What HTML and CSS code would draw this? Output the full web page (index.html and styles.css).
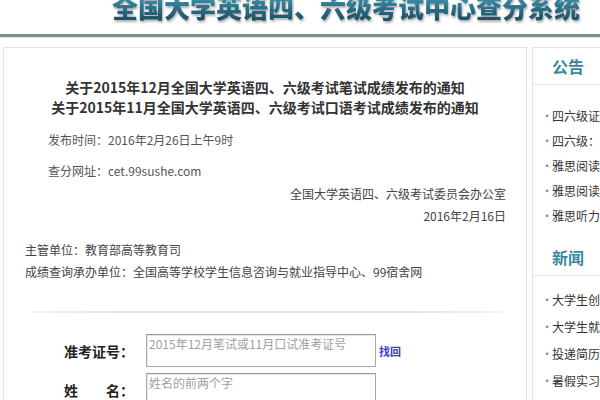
FILE: index.html
```html
<!DOCTYPE html>
<html lang="zh-CN">
  <head>
    <meta charset="utf-8">
    <meta name="viewport" content="width=device-width">
    <title>全国大学英语四、六级考试中心查分系统</title>
    <link rel="stylesheet" href="styles.css">
  </head>

  <body>
    <header class="top">
      <h1 class="site-title">全国大学英语四、六级考试中心查分系统</h1>
    </header>

    <div class="wrap">
      <main class="notice">
        <div class="notice-title">
          <p>关于2015年12月全国大学英语四、六级考试笔试成绩发布的通知</p>
          <p>关于2015年11月全国大学英语四、六级考试口语考试成绩发布的通知</p>
        </div>

        <div class="meta">
          <p>发布时间：2016年2月26日上午9时</p>
          <p>查分网址：cet.99sushe.com</p>
        </div>

        <div class="sign">
          <p>全国大学英语四、六级考试委员会办公室</p>
          <p>2016年2月16日</p>
        </div>

        <div class="org">
          <p>主管单位：教育部高等教育司</p>
          <p>成绩查询承办单位：全国高等学校学生信息咨询与就业指导中心、99宿舍网</p>
        </div>

        <hr class="split">

        <form class="query">
          <div class="row">
            <label for="zkzh">准考证号：</label>
            <textarea id="zkzh" class="field" placeholder="2015年12月笔试或11月口试准考证号"></textarea>
            <a href="#" class="find">找回</a>
          </div>
          <div class="row">
            <label for="xm">姓&#12288;&#12288;名：</label>
            <textarea id="xm" class="field" placeholder="姓名的前两个字"></textarea>
          </div>
        </form>
      </main>

      <aside class="side">
        <h2 class="side-head">公告</h2>
        <ul class="side-list ann">
          <li>四六级证书查询入口</li>
          <li>四六级：听力备考指南</li>
          <li>雅思阅读高分技巧</li>
          <li>雅思阅读真题解析</li>
          <li>雅思听力练习方法</li>
        </ul>

        <h2 class="side-head news-head">新闻</h2>
        <ul class="side-list news">
          <li>大学生创业政策解读</li>
          <li>大学生就业形势分析</li>
          <li>投递简历注意事项</li>
          <li>暑假实习机会汇总</li>
        </ul>
      </aside>
    </div>
  </body>
</html>
```

FILE: styles.css
```css
body {
    margin: 0;
    overflow: hidden;
    background: #fff;
    color: #333;
    font: 12px/20px "Noto Sans CJK SC", "Liberation Sans", sans-serif;
}
p {
    margin: 0;
}
.top {
    height: 34px;
    overflow: hidden;
    border-bottom: 3px solid #71908f;
    box-shadow: 0 1px 0 #d6ecec;
}
.site-title {
    margin: -10px 0 0;
    padding-right: 20px;
    text-align: right;
    font-size: 26px;
    line-height: 34px;
    font-weight: 900;
    color: #2c7088;
    background: linear-gradient(#4aa6c0, #2b6e86 55%, #1c4656);
    -webkit-background-clip: text;
    background-clip: text;
    -webkit-text-fill-color: transparent;
    filter: drop-shadow(1px 2px 1px rgba(80, 80, 80, 0.45));
}
.wrap {
    display: flex;
    gap: 5px;
    width: 780px;
    margin-top: 10px;
    padding-left: 3px;
}
.notice {
    width: 522px;
    flex: none;
    height: 400px;
    border: 1px solid #e2e2e2;
}
.notice-title {
    padding-top: 29px;
    text-align: center;
    font-size: 14px;
    font-weight: bold;
    color: #333;
}
.meta {
    padding: 13px 0 0 44px;
    color: #555;
}
.meta p + p {
    margin-top: 11px;
}
.sign {
    margin-top: 2px;
    padding-right: 20px;
    text-align: right;
    line-height: 22px;
    color: #444;
}
.org {
    margin-top: 12px;
    padding-left: 21px;
    line-height: 22px;
    color: #444;
}
.split {
    margin: 28px 24px 0 28px;
    height: 2px;
    border: 0;
    background: linear-gradient(90deg, #f4f4f4, #e2e2e2 20%, #e2e2e2 80%, #f4f4f4);
}
.query {
    padding: 21px 0 0 60px;
}
.row {
    display: flex;
    align-items: center;
    margin-bottom: 6px;
}
.row label {
    width: 82px;
    font-size: 14px;
    font-weight: bold;
    color: #222;
}
.field {
    width: 224px;
    height: 29px;
    margin: 0;
    padding: 1px 2px;
    border: 1px solid #aaa;
    border-top-color: #999;
    box-shadow: inset 1px 1px 1px #e6e6e6;
    resize: none;
    font: 12px/15px "Noto Sans CJK SC", sans-serif;
    color: #333;
}
.field::placeholder {
    color: #a0a0a0;
}
.find {
    margin-left: 3px;
    font-size: 11px;
    font-weight: bold;
    color: #3c3cd2;
    text-decoration: none;
}
.side {
    width: 220px;
    flex: none;
    height: 400px;
    border: 1px solid #e2e2e2;
}
.side-head {
    margin: 0;
    padding-left: 19px;
    line-height: 36px;
    font-size: 16px;
    font-weight: bold;
    color: #3a88a0;
    border-bottom: 1px solid #e6e6e6;
}
.news-head {
    margin-top: 11px;
}
.side-list {
    list-style: none;
    margin: 0;
    padding: 18px 0 0 8px;
    line-height: 25px;
    color: #333;
    white-space: nowrap;
}
.side-list li::before {
    content: "·";
    display: inline-block;
    width: 11px;
    color: #5f9aab;
}
.news {
    padding-top: 10px;
    line-height: 27px;
}
```
